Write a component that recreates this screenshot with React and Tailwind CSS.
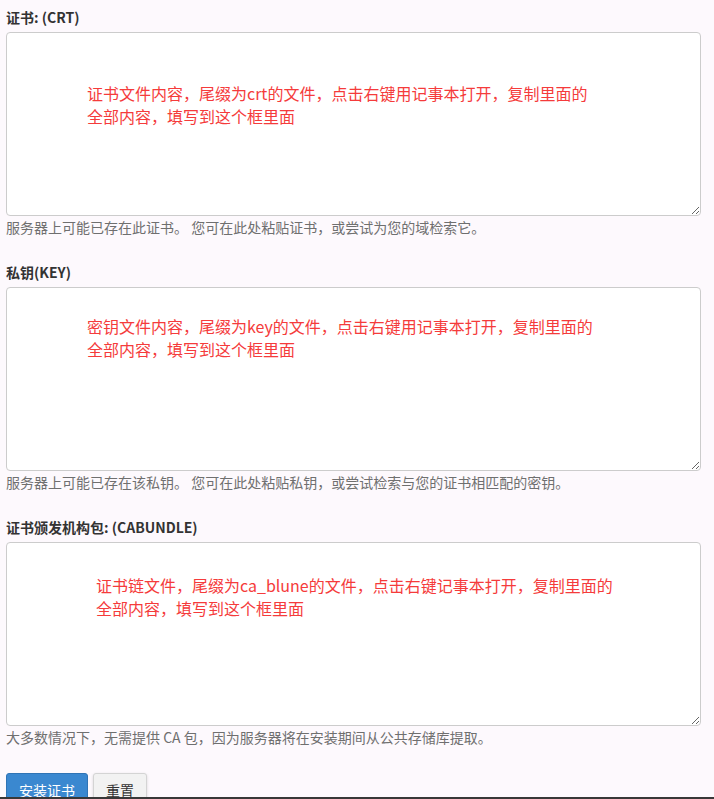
const font = { fontFamily: '"Noto Sans CJK SC", "Liberation Sans", sans-serif' };

const fields = [
  {
    label: '证书: (CRT)',
    note: ['证书文件内容，尾缀为crt的文件，点击右键用记事本打开，复制里面的', '全部内容，填写到这个框里面'],
    noteClass: 'left-[81px] top-[50px]',
    help: '服务器上可能已存在此证书。 您可在此处粘贴证书，或尝试为您的域检索它。',
  },
  {
    label: '私钥(KEY)',
    note: ['密钥文件内容，尾缀为key的文件，点击右键用记事本打开，复制里面的', '全部内容，填写到这个框里面'],
    noteClass: 'left-[81px] top-[28px]',
    help: '服务器上可能已存在该私钥。 您可在此处粘贴私钥，或尝试检索与您的证书相匹配的密钥。',
  },
  {
    label: '证书颁发机构包: (CABUNDLE)',
    note: ['证书链文件，尾缀为ca_blune的文件，点击右键记事本打开，复制里面的', '全部内容，填写到这个框里面'],
    noteClass: 'left-[90px] top-[32px]',
    help: '大多数情况下，无需提供 CA 包，因为服务器将在安装期间从公共存储库提取。',
  },
];

function Field({ field, first }) {
  return (
    <div className={first ? '' : 'mt-[26px]'}>
      <label className="block h-[20px] leading-[20px] text-[14px] font-bold text-[#333] mb-[5px]">{field.label}</label>
      <div className="relative">
        <textarea
          className="block w-[695px] h-[184px] bg-white border border-[#ccc] rounded-[4px] outline-none"
          defaultValue=""
        />
        <div className={`absolute ${field.noteClass} text-[16px] leading-[23px] text-[#f53b3b] pointer-events-none`}>
          {field.note.map((line) => (
            <div key={line}>{line}</div>
          ))}
        </div>
      </div>
      <p className="mt-[2px] h-[18px] leading-[18px] text-[14px] text-[#6f6f6f]">{field.help}</p>
    </div>
  );
}

export default function App() {
  return (
    <div style={font} className="relative h-[799px] overflow-hidden bg-[#fdf9fd] pl-[6px] pt-[7px]">
      {fields.map((f, i) => (
        <Field key={f.label} field={f} first={i === 0} />
      ))}
      <div className="mt-[27px] flex gap-[5px]">
        <button className="h-[34px] px-[12px] text-[14px] text-white bg-[#3a88d0] border border-[#2f74b5] rounded-[3px]">安装证书</button>
        <button className="h-[34px] px-[12px] text-[14px] text-[#333] bg-[#f2f2f2] border border-[#d4d4d4] rounded-[3px] shadow-[0_1px_3px_rgba(0,0,0,0.15)]">重置</button>
      </div>
      <div className="absolute left-0 right-0 bottom-0 h-[2px] bg-[#383838]" />
    </div>
  );
}
